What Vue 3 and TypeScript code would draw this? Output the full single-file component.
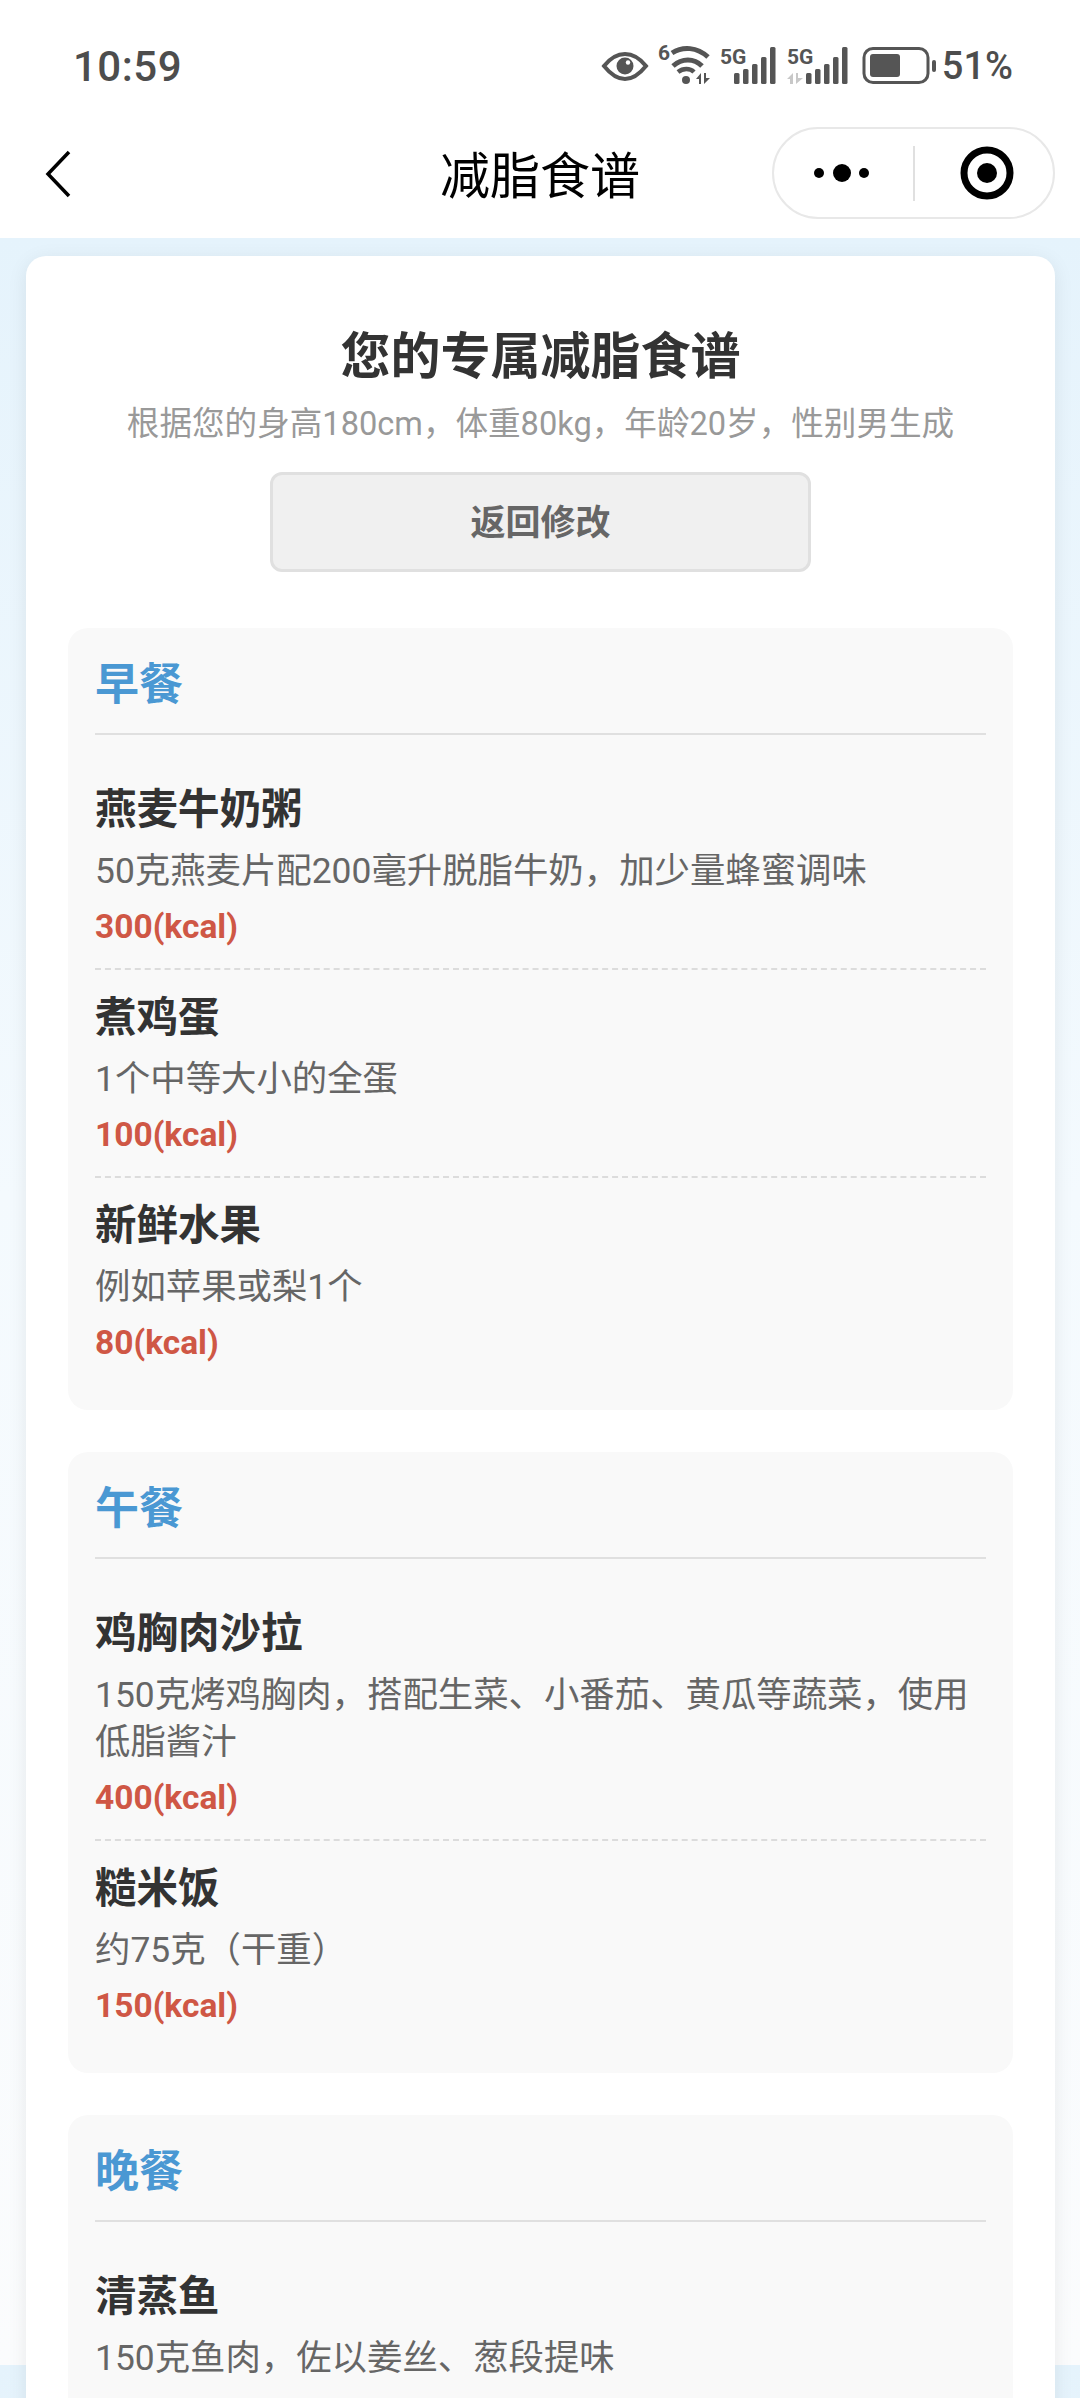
<script setup lang="ts">
interface Dish {
  name: string
  desc: string
  kcal?: number
}

interface Meal {
  title: string
  dishes: Dish[]
}

const meals: Meal[] = [
  {
    title: '早餐',
    dishes: [
      { name: '燕麦牛奶粥', desc: '50克燕麦片配200毫升脱脂牛奶，加少量蜂蜜调味', kcal: 300 },
      { name: '煮鸡蛋', desc: '1个中等大小的全蛋', kcal: 100 },
      { name: '新鲜水果', desc: '例如苹果或梨1个', kcal: 80 }
    ]
  },
  {
    title: '午餐',
    dishes: [
      { name: '鸡胸肉沙拉', desc: '150克烤鸡胸肉，搭配生菜、小番茄、黄瓜等蔬菜，使用低脂酱汁', kcal: 400 },
      { name: '糙米饭', desc: '约75克（干重）', kcal: 150 }
    ]
  },
  {
    title: '晚餐',
    dishes: [
      { name: '清蒸鱼', desc: '150克鱼肉，佐以姜丝、葱段提味' }
    ]
  }
]

const bars1 = [[735, 73], [744, 69], [753, 64], [762, 57], [771, 47]]
const bars2 = [[807, 73], [816, 69], [825, 64], [834, 57], [843, 47]]
</script>

<template>
  <div class="page">
    <div class="status-bar">
      <span class="time">10:59</span>
      <div class="status-right">
        <svg class="status-icons" width="338" height="60" viewBox="600 36 338 60">
          <!-- eye -->
          <path d="M605 66 C613 56 620 54 626 54 C632 54 639 56 647 66 C639 76 632 79 626 79 C620 79 613 76 605 66 Z" fill="none" stroke="#555" stroke-width="4" />
          <circle cx="626" cy="66" r="8.5" fill="#555" />
          <circle cx="629" cy="62.5" r="2.2" fill="#fff" />
          <!-- wifi 6 -->
          <text x="659" y="60" class="tiny">6</text>
          <path d="M673 53 C684 46 698 47 709 57" fill="none" stroke="#555" stroke-width="5" />
          <path d="M674 66 C683 58 695 58 703 66" fill="none" stroke="#555" stroke-width="5" />
          <path d="M679 72 C684 68 691 68 695 72" fill="none" stroke="#555" stroke-width="4.5" />
          <circle cx="687" cy="80" r="4" fill="#555" />
          <path d="M702 84 V73 L697 79 H700 V84 Z M705 84 V73 H707 V78 H711 L705 84 Z" fill="#555" />
          <!-- sim 1 -->
          <text x="721" y="64" class="tiny">5G</text>
          <rect v-for="b in bars1" :key="b[0]" :x="b[0]" :y="b[1]" width="5.5" :height="84 - b[1]" rx="1.5" fill="#555" />
          <!-- sim 2 -->
          <text x="788" y="64" class="tiny">5G</text>
          <path d="M794 84 V73 L788 79 H791 V84 Z M797 84 V73 H799 V78 H804 L797 84 Z" fill="#c8c8c8" />
          <rect v-for="b in bars2" :key="b[0]" :x="b[0]" :y="b[1]" width="5.5" :height="84 - b[1]" rx="1.5" fill="#555" />
          <!-- battery -->
          <rect x="865" y="48.5" width="64" height="34" rx="9" fill="none" stroke="#555" stroke-width="3" />
          <rect x="871" y="54" width="30" height="23" rx="3" fill="#555" />
          <rect x="933" y="60" width="4" height="12" rx="2" fill="#555" />
        </svg>
        <span class="battery-text">51%</span>
      </div>
    </div>

    <div class="nav-bar">
      <svg class="back" width="26" height="48" viewBox="0 0 26 48">
        <path d="M24 2 L3 24 L24 46" fill="none" stroke="#000" stroke-width="3.5" />
      </svg>
      <span class="nav-title">减脂食谱</span>
      <div class="capsule">
        <svg width="66" height="24" viewBox="0 0 66 24">
          <circle cx="10" cy="12" r="5" fill="#000" />
          <circle cx="33" cy="12" r="9" fill="#000" />
          <circle cx="55" cy="12" r="5" fill="#000" />
        </svg>
        <i class="capsule-line"></i>
        <svg width="54" height="54" viewBox="0 0 54 54">
          <circle cx="27" cy="27" r="23" fill="none" stroke="#000" stroke-width="7" />
          <circle cx="27" cy="27" r="10" fill="#000" />
        </svg>
      </div>
    </div>

    <div class="content">
      <div class="card">
        <div class="head">
          <div class="title">您的专属减脂食谱</div>
          <div class="sub">根据您的身高180cm，体重80kg，年龄20岁，性别男生成</div>
          <button class="back-btn">返回修改</button>
        </div>

        <div v-for="meal in meals" :key="meal.title" class="meal">
          <div class="meal-title">{{ meal.title }}</div>
          <div v-for="dish in meal.dishes" :key="dish.name" class="dish">
            <div class="dish-name">{{ dish.name }}</div>
            <div class="dish-desc">{{ dish.desc }}</div>
            <div v-if="dish.kcal" class="dish-kcal">{{ dish.kcal }}(kcal)</div>
          </div>
        </div>
      </div>
    </div>
  </div>
</template>

<style>
body {
  margin: 0;
  overflow: hidden;
}
</style>

<style scoped>
.page {
  width: 1080px;
  height: 2398px;
  overflow: hidden;
  display: flex;
  flex-direction: column;
  background: #fff;
  font-family: Roboto, "Noto Sans CJK SC", sans-serif;
}

.status-bar {
  height: 100px;
  flex-shrink: 0;
  padding: 32px 67px 0 73px;
  box-sizing: border-box;
  display: flex;
  align-items: center;
  justify-content: space-between;
  color: #4d4d4d;
}
.time {
  font-size: 42px;
  font-weight: 500;
  letter-spacing: 0.5px;
}
.status-right {
  display: flex;
  align-items: center;
  gap: 5px;
}
.status-icons {
  display: block;
}
.tiny {
  font-family: Roboto, sans-serif;
  font-size: 21px;
  font-weight: 700;
  fill: #555;
}
.battery-text {
  font-size: 38px;
  font-weight: 500;
}

.nav-bar {
  height: 138px;
  flex-shrink: 0;
  display: grid;
  grid-template-columns: 1fr auto 1fr;
  align-items: center;
  padding: 6px 25px 0 45px;
  box-sizing: border-box;
}
.back {
  display: block;
  margin-top: 4px;
}
.nav-title {
  font-family: "Noto Sans CJK SC", sans-serif;
  font-size: 50px;
  color: #000;
  margin-left: -20px;
}
.capsule {
  justify-self: end;
  width: 283px;
  height: 92px;
  box-sizing: border-box;
  border: 2px solid #e8e8e8;
  border-radius: 46px;
  display: flex;
  align-items: center;
  padding-left: 35px;
  margin-top: 2px;
}
.capsule-line {
  width: 2px;
  height: 55px;
  background: #e0e0e0;
  margin: 0 45px 0 38px;
}

.content {
  flex: 1;
  min-height: 0;
  padding: 18px 25px 0 26px;
  background: linear-gradient(180deg, #e5f3fc 0%, #f4fafe 45%, #fbfcfd 100%);
  background-size: 100% 2127px;
}

.card {
  background: #fff;
  border-radius: 20px;
  padding: 66px 42px 40px;
  box-shadow: 0 4px 20px rgba(0, 0, 0, 0.08);
}

.head {
  display: flex;
  flex-direction: column;
  align-items: center;
  margin-bottom: 56px;
}
.title {
  font-size: 50px;
  line-height: 70px;
  font-weight: 700;
  color: #333;
}
.sub {
  font-size: 32.6px;
  line-height: 44px;
  color: #999;
  margin-top: 10px;
}
.back-btn {
  width: 541px;
  height: 100px;
  margin-top: 26px;
  padding: 0 0 5px;
  box-sizing: border-box;
  font-family: inherit;
  font-size: 35px;
  font-weight: 700;
  color: #666;
  background: #f0f0f0;
  border: 3px solid #e0e0e0;
  border-radius: 12px;
}

.meal {
  background: #f9f9f9;
  border-radius: 20px;
  padding: 27px 27px 26px;
  margin-bottom: 42px;
}
.meal-title {
  font-size: 44px;
  line-height: 60px;
  font-weight: 700;
  color: #4a98d3;
  padding-bottom: 18px;
  border-bottom: 2px solid #e0e0e0;
  margin-bottom: 27px;
}
.dish {
  padding: 20px 0 19px;
  border-bottom: 2px dashed #dcdcdc;
}
.dish:last-child {
  border-bottom: none;
}
.dish-name {
  font-size: 41.5px;
  line-height: 56px;
  font-weight: 700;
  color: #333;
}
.dish-desc {
  font-size: 35.4px;
  line-height: 47px;
  color: #666;
  margin-top: 10px;
}
.dish-kcal {
  font-size: 33.5px;
  line-height: 44px;
  font-weight: 700;
  color: #cf5745;
  margin-top: 10px;
}
</style>
